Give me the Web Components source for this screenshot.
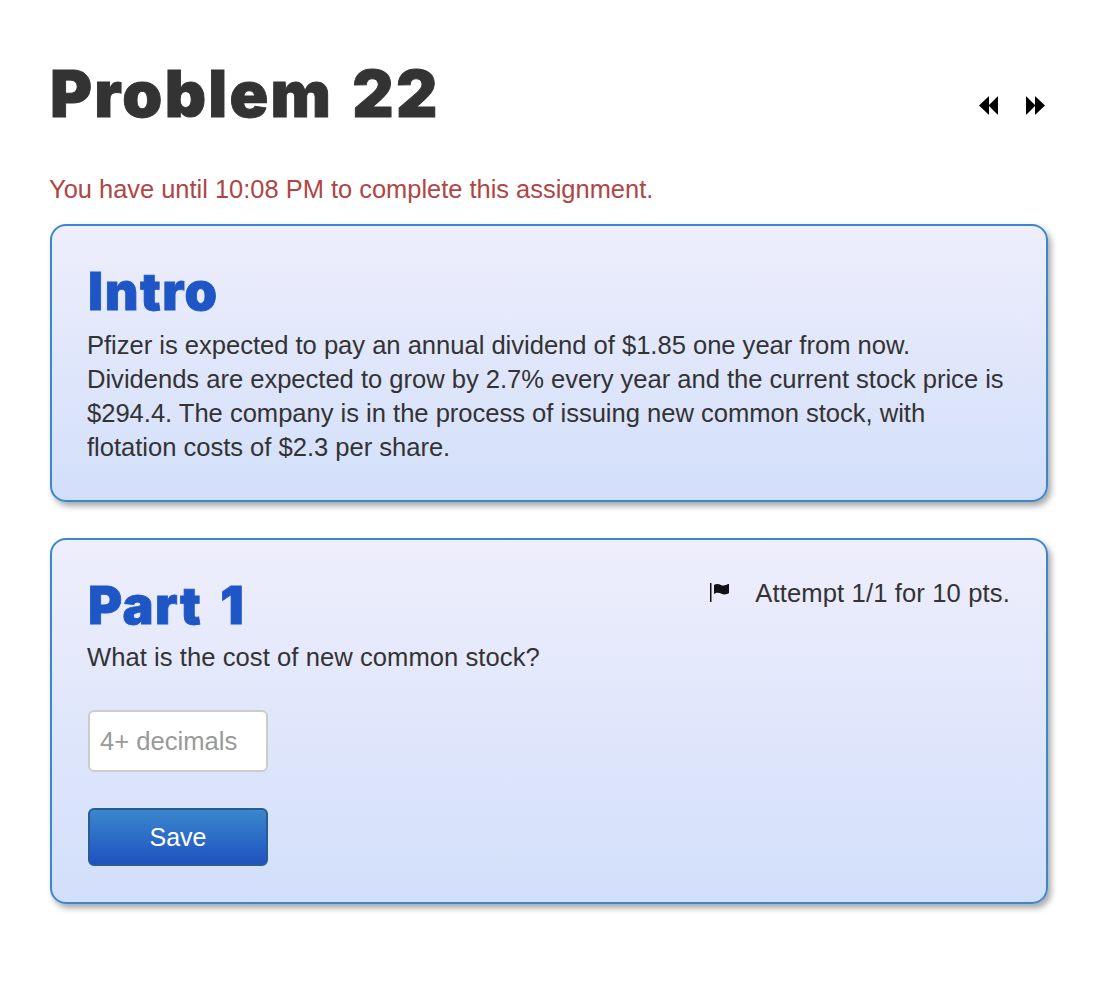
<!DOCTYPE html>
<html>
<head>
<meta charset="utf-8">
<style>
  body {
    margin: 0;
    background: #fff;
    font-family: "Liberation Sans", Arial, sans-serif;
    font-size: 25.6px;
    line-height: 34px;
    color: #333;
  }
</style>
</head>
<body>
<quiz-page>
  <quiz-header title="Problem 22"></quiz-header>
  <time-notice>You have until 10:08 PM to complete this assignment.</time-notice>
  <quiz-box heading="Intro">
    Pfizer is expected to pay an annual dividend of $1.85 one year from now. Dividends are expected to grow by 2.7% every year and the current stock price is $294.4. The company is in the process of issuing new common stock, with flotation costs of $2.3 per share.
  </quiz-box>
  <quiz-box heading="Part 1" attempt="Attempt 1/1 for 10 pts.">
    What is the cost of new common stock?
    <answer-form slot="form" placeholder="4+ decimals"></answer-form>
  </quiz-box>
</quiz-page>

<script>
class QuizPage extends HTMLElement {
  constructor() {
    super();
    this.attachShadow({ mode: "open" });
    this.shadowRoot.innerHTML = `
      <style>
        :host { display: block; padding: 50px 66px 50px 50px; }
        .stack { display: flex; flex-direction: column; }
      </style>
      <div class="stack"><slot></slot></div>`;
  }
}

class QuizHeader extends HTMLElement {
  constructor() {
    super();
    this.attachShadow({ mode: "open" });
  }

  connectedCallback() {
    this.shadowRoot.innerHTML = `
      <style>
        :host { display: flex; justify-content: space-between; align-items: flex-end; height: 88px; }
        h1 {
          margin: 0;
          font: 900 64px/88px Inter, "Liberation Sans", sans-serif;
          letter-spacing: 2.3px;
          word-spacing: 4px;
          -webkit-text-stroke: .9px #333;
          color: #333;
        }
        nav { display: flex; gap: 28px; padding-bottom: 23px; margin-right: 3px; }
        svg { display: block; width: 19px; height: 19px; fill: #000; }
      </style>
      <h1>${this.getAttribute("title")}</h1>
      <nav>
        <svg viewBox="0 0 19 19"><path d="M10 .5V9L18.500.5h.5v18h-.5L10 10v8.500h-.5L0 9.500 9.500.5z"/></svg>
        <svg viewBox="0 0 19 19"><path d="M9 .5V9L.5.5H0v18h.5L9 10v8.500h.5L19 9.500 9.500.5z"/></svg>
      </nav>`;
  }
}

class TimeNotice extends HTMLElement {
  constructor() {
    super();
    this.attachShadow({ mode: "open" });
    this.shadowRoot.innerHTML = `
      <style>
        :host { display: block; margin: 34px 0 18px -1px; font-size: 25.45px; color: #b04545; }
      </style>
      <slot></slot>`;
  }
}

class QuizBox extends HTMLElement {
  constructor() {
    super();
    this.attachShadow({ mode: "open" });
  }

  connectedCallback() {
    const attempt = this.getAttribute("attempt");
    this.shadowRoot.innerHTML = `
      <style>
        :host {
          display: block;
          border: 2px solid #3a87cc;
          border-radius: 16px;
          padding: 36px;
          margin-bottom: 36px;
          background: linear-gradient(#eeeefc, #d2dffa);
          box-shadow: 3px 4px 6px rgba(0, 0, 0, .35);
        }
        .top { display: flex; justify-content: space-between; align-items: flex-start; margin-bottom: 6px; }
        :host([attempt]) .top { margin-bottom: 4px; }
        h2 {
          margin: 0;
          font: 900 52px/60px Inter, "Liberation Sans", sans-serif;
          letter-spacing: 1.5px;
          word-spacing: 6px;
          -webkit-text-stroke: .8px #1f56c5;
          color: #1f56c5;
        }
        .attempt { display: flex; align-items: center; gap: 26px; letter-spacing: .13px; }
        .attempt svg { width: 20px; height: 20px; }
        .text { margin-left: -1px; letter-spacing: -.03px; }
        :host([attempt]) .text { letter-spacing: .05px; }
      </style>
      <div class="top">
        <h2>${this.getAttribute("heading")}</h2>
        ${attempt ? `<div class="attempt">
          <svg viewBox="0 0 20 20"><path d="M1 0h1.500v19H1zM5 2c2-1.500 5-1 7 0s4 .5 7-1h1v9c-3 2-6 1.500-8 .5s-5-1-7 .5z" fill="#111"/></svg>
          <span>${attempt}</span>
        </div>` : ""}
      </div>
      <div class="text"><slot></slot></div>
      <slot name="form"></slot>`;
  }
}

class AnswerForm extends HTMLElement {
  constructor() {
    super();
    this.attachShadow({ mode: "open" });
  }

  connectedCallback() {
    this.shadowRoot.innerHTML = `
      <style>
        :host { display: block; margin-top: 36px; }
        input {
          display: block;
          box-sizing: border-box;
          width: 180px;
          height: 62px;
          padding: 0 10px;
          border: 2px solid #ccc;
          border-radius: 6px;
          background: #fff;
          font: 25.6px "Liberation Sans", sans-serif;
          color: #333;
          outline: none;
        }
        input::placeholder { color: #999; opacity: 1; }
        button {
          display: block;
          box-sizing: border-box;
          width: 180px;
          height: 58px;
          margin-top: 36px;
          border: 2px solid #2c5a94;
          border-radius: 6px;
          background: linear-gradient(#3a87cc, #1f52c0);
          color: #fff;
          font: 25px "Liberation Sans", sans-serif;
        }
      </style>
      <input type="text" placeholder="${this.getAttribute("placeholder")}">
      <button type="button">Save</button>`;
  }
}

customElements.define("quiz-page", QuizPage);
customElements.define("quiz-header", QuizHeader);
customElements.define("time-notice", TimeNotice);
customElements.define("quiz-box", QuizBox);
customElements.define("answer-form", AnswerForm);
</script>
</body>
</html>
